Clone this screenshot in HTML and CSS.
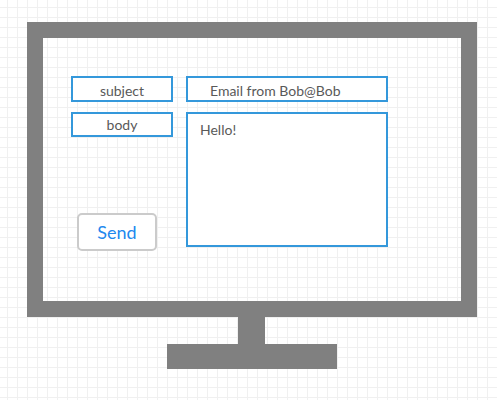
FILE: index.html
```html
<!DOCTYPE html>
<html>
<head>
<meta charset="utf-8">
<link rel="stylesheet" href="styles.css">
</head>
<body>
<div class="page">
  <div class="monitor">
    <div class="screen">
      <div class="form">
        <div class="label label-subject">subject</div>
        <div class="field field-line">Email from Bob@Bob</div>
        <div class="left-col">
          <div class="label label-body">body</div>
          <button class="send">Send</button>
        </div>
        <div class="field field-area">Hello!</div>
      </div>
    </div>
    <div class="neck"></div>
    <div class="base"></div>
  </div>
</div>
</body>
</html>
```
FILE: styles.css
```css
html, body {
  margin: 0;
  padding: 0;
}
body {
  width: 497px;
  height: 400px;
  background-color: #fff;
  background-image:
    linear-gradient(to right, #f0f0f0 1px, transparent 1px),
    linear-gradient(to bottom, #f0f0f0 1px, transparent 1px);
  background-size: 10px 10px;
  background-position: 7px 7px;
  font-family: Lato, "Liberation Sans", sans-serif;
  color: #595959;
}
.page {
  padding: 22px 0 0 27px;
}
.monitor {
  width: 450px;
  display: flex;
  flex-direction: column;
  align-items: center;
}
.screen {
  box-sizing: border-box;
  width: 450px;
  height: 295px;
  border: 16px solid #808080;
  padding: 38px 0 0 28px;
}
.neck {
  width: 27px;
  height: 27px;
  background: #808080;
  margin-left: -1px;
}
.base {
  width: 170px;
  height: 25px;
  background: #808080;
}
.form {
  display: grid;
  grid-template-columns: 102px 202px;
  grid-template-rows: 26px 135px;
  column-gap: 13px;
  row-gap: 10px;
}
.label, .field {
  box-sizing: border-box;
  border: 2px solid #3498db;
  background: #fff;
  font-size: 14px;
}
.label {
  height: 26px;
  display: flex;
  align-items: center;
  justify-content: center;
}
.label-subject {
  padding: 2px 0 0 0;
}
.label-body {
  height: 25px;
  flex-shrink: 0;
  align-self: stretch;
  padding: 0 0 1px 0;
}
.field-line {
  height: 26px;
  display: flex;
  align-items: center;
  padding: 2px 0 0 22px;
}
.field-area {
  height: 135px;
  padding: 7px 0 0 12px;
  line-height: 17px;
}
.left-col {
  display: flex;
  flex-direction: column;
  align-items: flex-start;
}
.send {
  box-sizing: border-box;
  flex-shrink: 0;
  margin: 76px 0 0 6px;
  width: 80px;
  height: 38px;
  border: 2px solid #cbcbcb;
  border-radius: 5px;
  background: #fff;
  color: #2288ee;
  font-family: Lato, "Liberation Sans", sans-serif;
  font-size: 18px;
  padding: 0 0 1px 0;
}
```
